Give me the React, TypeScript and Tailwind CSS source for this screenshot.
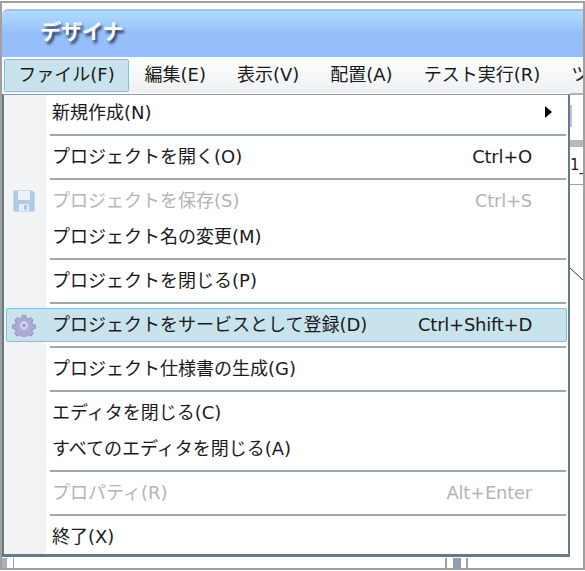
const font = "font-['DejaVu_Sans','Noto_Sans_CJK_JP',sans-serif]";

type Item = {
  label: string;
  shortcut?: string;
  disabled?: boolean;
  active?: boolean;
  icon?: "save" | "gear";
  arrow?: boolean;
};

const groups: Item[][] = [
  [{ label: "新規作成(N)", arrow: true }],
  [{ label: "プロジェクトを開く(O)", shortcut: "Ctrl+O" }],
  [
    { label: "プロジェクトを保存(S)", shortcut: "Ctrl+S", disabled: true, icon: "save" },
    { label: "プロジェクト名の変更(M)" },
  ],
  [{ label: "プロジェクトを閉じる(P)" }],
  [{ label: "プロジェクトをサービスとして登録(D)", shortcut: "Ctrl+Shift+D", active: true, icon: "gear" }],
  [{ label: "プロジェクト仕様書の生成(G)" }],
  [{ label: "エディタを閉じる(C)" }, { label: "すべてのエディタを閉じる(A)" }],
  [{ label: "プロパティ(R)", shortcut: "Alt+Enter", disabled: true }],
  [{ label: "終了(X)" }],
];

const menus = ["編集(E)", "表示(V)", "配置(A)", "テスト実行(R)", "ツ"];

const SaveIcon = () => (
  <svg width="24" height="24" viewBox="0 0 24 24">
    <path d="M2 2h18l2 2v18H2z" fill="#afcbe9" stroke="#a3c0e2" />
    <rect x="6" y="2" width="12" height="9" fill="#eef3f8" />
    <rect x="7" y="15" width="10" height="7" fill="#e6edf5" />
    <rect x="12" y="16" width="3" height="5" fill="#a9c6e6" />
  </svg>
);

const GearIcon = () => (
  <svg width="24" height="24" viewBox="0 0 24 24">
    <path
      d="M10 2h4l.7 3 2.2 1 2.7-1.6 2.7 2.8-1.6 2.6.9 2.2 3 .7v4l-3 .7-.9 2.2 1.6 2.6-2.7 2.8-2.7-1.6-2.2.9-.7 3h-4l-.7-3-2.2-.9-2.7 1.6-2.7-2.8 1.6-2.6-.9-2.2-3-.7v-4l3-.7.9-2.2L1.7 7.2l2.7-2.8L7.1 6l2.2-1z"
      transform="translate(1.2 .6) scale(.9)"
      fill="#aeaad6"
      stroke="#8f8dbd"
    />
    <circle cx="12" cy="12.5" r="4.2" fill="#ccd6ec" />
    <circle cx="12" cy="12.5" r="1.8" fill="#95a1d4" />
  </svg>
);

const Row = ({ item }: { item: Item }) => {
  const text = item.disabled ? "text-[#b4b4b4]" : "text-[#1a1a1a]";
  return (
    <div className="h-[36px] py-[1px]">
      <div
        className={`relative flex items-center h-full pl-[45px] pr-[34px] pb-[2px] text-[18px] ${text} ${
          item.active ? "border border-[#7fc4d6] rounded-[2px] bg-[#c9e3ed]" : "border border-transparent"
        }`}
      >
        {item.icon && (
          <span className="absolute left-[5px] top-[4px]">
            {item.icon === "save" ? <SaveIcon /> : <GearIcon />}
          </span>
        )}
        <span className="whitespace-nowrap">{item.label}</span>
        {item.shortcut && (
          <span className="ml-auto whitespace-nowrap tracking-[-0.25px]">{item.shortcut}</span>
        )}
        {item.arrow && (
          <span className="ml-auto mr-[-20px] w-0 h-0 border-y-[6px] border-y-transparent border-l-[7px] border-l-black" />
        )}
      </div>
    </div>
  );
};

export default function App() {
  return (
    <div className="w-[585px] h-[571px] bg-white pt-[1px] overflow-hidden">
      <div className={`${font} relative flex flex-col h-[569px] border-2 border-[#a0a0a0] pt-[6px]`}>
        <div className="h-[48px] shrink-0 rounded-tl-[6px] border-t-2 border-t-[#9cc3f5] bg-[linear-gradient(#b0dcff_0%,#95bffb_50%,#96befb_100%)] flex items-center pl-[38px] pb-[2px]">
          <span className="text-[21px] font-bold text-white [text-shadow:2px_3px_3px_#22365c]">デザイナ</span>
        </div>

        <div className="h-[36px] shrink-0 pt-[1px] bg-[linear-gradient(#ffffff,#eef0f2)] flex items-center pl-[2px] text-[18px] text-[#1a1a1a] overflow-hidden">
          <div className="w-[125px] h-[33px] shrink-0 pb-[2px] flex items-center justify-center bg-[#c9e3ed] border border-[#7fc4d6] rounded-[2px]">
            ファイル(F)
          </div>
          {menus.map((m) => (
            <div key={m} className="shrink-0 whitespace-nowrap px-[15.5px] pb-[2px]">
              {m}
            </div>
          ))}
        </div>

        {/* editor behind the menu, only a strip of it shows */}
        <div className="flex-1 flex justify-end min-h-0">
          <div className="w-[13px] border-t-2 border-t-[#a9b3bd] pt-[10px] flex flex-col overflow-hidden">
            <div className="w-[2px] h-[22px] bg-[#b9c4e6]" />
            <div className="mt-[13px] h-[7px] bg-[#b0b8c0]" />
            <div className="mt-[8px] h-[20px] text-[15px] leading-[20px] text-[#222]">1_</div>
            <div className="mt-[9px] h-[1px] bg-[#a0a0a0]" />
            <svg className="mt-[83px] shrink-0" width="13" height="14" viewBox="0 0 13 14">
              <path d="M0 0l13 12" stroke="#333" fill="none" />
            </svg>
          </div>
        </div>
        <div className="h-[10px] shrink-0 flex">
          <span className="w-[5px] bg-[#a9b2ba]" />
          <span className="ml-[6px] w-[1px] bg-[#a0a0a0]" />
          <span className="ml-[431px] w-[2px] bg-[#a0a0a0]" />
          <span className="ml-[6px] w-[8px] bg-[#8fa0b0]" />
          <span className="ml-[5px] w-[2px] bg-[#a0a0a0]" />
        </div>

        <div className="absolute left-0 top-[91px] w-[568px] h-[463px] bg-white border-l-2 border-r-2 border-b-3 border-[#657b8a] border-t border-t-[#8c9aa6] pl-[2px] pr-[1px] overflow-hidden">
          <div className="absolute left-0 top-0 bottom-0 w-[42px] bg-[#f1f3f5]" />
          <div className="relative">
            {groups.map((group, i) => (
              <div key={i}>
                {i > 0 && <div className="h-[2px] my-[3px] ml-[44px] mr-[1px] bg-[#9aa8b4]" />}
                {group.map((item) => (
                  <Row key={item.label} item={item} />
                ))}
              </div>
            ))}
          </div>
        </div>
      </div>
    </div>
  );
}
